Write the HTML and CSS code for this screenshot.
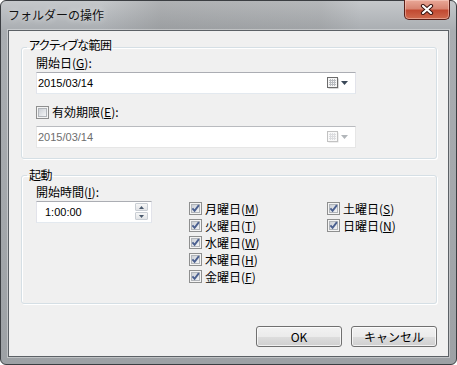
FILE: index.html
```html
<!DOCTYPE html>
<html lang="ja">
<head>
    <meta charset="UTF-8">
    <meta name="viewport" content="width=device-width, initial-scale=1.0">
    <title>フォルダーの操作</title>
    <link rel="stylesheet" href="styles.css">
</head>
<body>
    <div class="window">
        <div class="titlebar">
            <span class="title">フォルダーの操作</span>
            <button class="close" aria-label="閉じる">
                <svg width="14" height="11" viewBox="0 0 14 11">
                    <path d="M3 2 L11 9 M11 2 L3 9" stroke="#3a1410" stroke-width="4.2" stroke-linecap="round"/>
                    <path d="M3 2 L11 9 M11 2 L3 9" stroke="#ffffff" stroke-width="2.2" stroke-linecap="round"/>
                </svg>
            </button>
        </div>

        <div class="client">
            <fieldset class="group group-range">
                <legend>アクティブな範囲</legend>
                <div class="field-label">開始日(<u>G</u>):</div>
                <div class="datebox">
                    <span class="value">2015/03/14</span>
                    <span class="picker">
                        <svg class="cal" width="12" height="12" viewBox="0 0 12 12"><use href="#cal"/></svg>
                        <svg class="drop" width="8" height="5" viewBox="0 0 8 5"><path d="M0 0 H7 L3.5 4 Z"/></svg>
                    </span>
                </div>
                <label class="check check-end">
                    <svg class="box" width="13" height="13" viewBox="0 0 13 13"><use href="#cb"/></svg>
                    <span>有効期限(<u>E</u>):</span>
                </label>
                <div class="datebox disabled">
                    <span class="value">2015/03/14</span>
                    <span class="picker">
                        <svg class="cal" width="12" height="12" viewBox="0 0 12 12"><use href="#cal-off"/></svg>
                        <svg class="drop" width="8" height="5" viewBox="0 0 8 5"><path d="M0 0 H7 L3.5 4 Z"/></svg>
                    </span>
                </div>
            </fieldset>

            <fieldset class="group group-start">
                <legend>起動</legend>
                <div class="field-label">開始時間(<u>I</u>):</div>
                <div class="start-row">
                    <div class="timebox">
                        <span class="value">1:00:00</span>
                        <span class="spin">
                            <span class="spin-btn"><svg width="5" height="3" viewBox="0 0 5 3"><path d="M0 3 H5 L2.5 0 Z"/></svg></span>
                            <span class="spin-btn"><svg width="5" height="3" viewBox="0 0 5 3"><path d="M0 0 H5 L2.5 3 Z"/></svg></span>
                        </span>
                    </div>
                    <div class="days">
                        <label class="check"><svg class="box" width="13" height="13" viewBox="0 0 13 13"><use href="#cb-on"/></svg><span>月曜日(<u>M</u>)</span></label>
                        <label class="check"><svg class="box" width="13" height="13" viewBox="0 0 13 13"><use href="#cb-on"/></svg><span>火曜日(<u>T</u>)</span></label>
                        <label class="check"><svg class="box" width="13" height="13" viewBox="0 0 13 13"><use href="#cb-on"/></svg><span>水曜日(<u>W</u>)</span></label>
                        <label class="check"><svg class="box" width="13" height="13" viewBox="0 0 13 13"><use href="#cb-on"/></svg><span>木曜日(<u>H</u>)</span></label>
                        <label class="check"><svg class="box" width="13" height="13" viewBox="0 0 13 13"><use href="#cb-on"/></svg><span>金曜日(<u>F</u>)</span></label>
                        <label class="check"><svg class="box" width="13" height="13" viewBox="0 0 13 13"><use href="#cb-on"/></svg><span>土曜日(<u>S</u>)</span></label>
                        <label class="check"><svg class="box" width="13" height="13" viewBox="0 0 13 13"><use href="#cb-on"/></svg><span>日曜日(<u>N</u>)</span></label>
                    </div>
                </div>
            </fieldset>

            <div class="buttons">
                <button class="btn">OK</button>
                <button class="btn">キャンセル</button>
            </div>
        </div>
    </div>

    <svg class="defs" width="0" height="0">
        <defs>
            <linearGradient id="cbfill" x1="0" y1="0" x2="1" y2="1">
                <stop offset="0" stop-color="#c9cdd3"/>
                <stop offset="1" stop-color="#f6f7f8"/>
            </linearGradient>
            <symbol id="cb" viewBox="0 0 13 13">
                <rect x="0.5" y="0.5" width="12" height="12" fill="#f4f4f4" stroke="#8e8f8f"/>
                <rect x="2.5" y="2.5" width="8" height="8" fill="url(#cbfill)" stroke="#b1b5ba"/>
            </symbol>
            <symbol id="cb-on" viewBox="0 0 13 13">
                <use href="#cb"/>
                <path d="M3.4 6.4 L5.6 8.8 L9.9 3.2" fill="none" stroke="#4a5f8f" stroke-width="1.9"/>
            </symbol>
            <symbol id="cal" viewBox="0 0 12 12">
                <rect x="1.5" y="1.5" width="10" height="10" fill="#b4b4b4"/>
                <rect x="0.5" y="0.5" width="10" height="10" fill="#f6f6f6" stroke="#6b6b6b"/>
                <path d="M2 3.5 H9 M2 5.5 H9 M2 7.5 H9 M3.5 2 V9 M5.5 2 V9 M7.5 2 V9" stroke="#b9bcc0"/>
            </symbol>
            <symbol id="cal-off" viewBox="0 0 12 12">
                <rect x="1.5" y="1.5" width="10" height="10" fill="#dedede"/>
                <rect x="0.5" y="0.5" width="10" height="10" fill="#f9f9f9" stroke="#c2c2c2"/>
                <path d="M2 3.5 H9 M2 5.5 H9 M2 7.5 H9 M3.5 2 V9 M5.5 2 V9 M7.5 2 V9" stroke="#dcdde0"/>
            </symbol>
        </defs>
    </svg>
</body>
</html>
```

FILE: styles.css
```css
body {
    margin: 0;
    overflow: hidden;
    font-family: "Noto Sans CJK JP", sans-serif;
    font-size: 12px;
    color: #000;
    font-feature-settings: "palt";
}
.window {
    box-sizing: border-box;
    width: 457px;
    height: 365px;
    display: flex;
    flex-direction: column;
    padding-bottom: 7px;
    border: 1px solid #3b3e42;
    border-radius: 6px;
    background: linear-gradient(to bottom, #c5c8cb 0, #a9adb1 30px, #a3a7ab 60%, #9da1a5 100%);
}
.titlebar {
    height: 29px;
    display: flex;
    justify-content: space-between;
    align-items: flex-start;
    padding: 0 6px 0 7px;
    background: linear-gradient(to right, rgba(255,255,255,0) 100px, rgba(110,110,110,0.25) 160px, rgba(120,120,120,0.2) 320px, rgba(255,255,255,0) 360px);
}
.title {
    margin-top: 5px;
    line-height: 18px;
    font-feature-settings: normal;
    color: #111;
    text-shadow: 0 0 6px rgba(255,255,255,0.8);
}
.close {
    width: 46px;
    height: 20px;
    margin-top: -1px;
    padding: 0;
    display: flex;
    justify-content: center;
    align-items: center;
    border: 1px solid #5a1f18;
    border-top: none;
    border-radius: 0 0 5px 5px;
    background: linear-gradient(to bottom, #e9a898 0, #d88572 45%, #c24a32 55%, #cf6a4e 100%);
    box-shadow: inset 0 0 0 1px rgba(255,220,210,0.45);
}
.client {
    flex: 1;
    margin: 0 7px;
    padding: 0 11px 0 12px;
    border: 1px solid #5c6166;
    background: #f0f0f0;
    box-shadow: 0 0 0 1px rgba(255,255,255,0.35);
}
.group {
    margin: 8px 0 0;
    padding: 0 14px;
    border: 1px solid #d5dfe5;
    border-radius: 3px;
    box-shadow: 1px 1px 0 #fff, inset 1px 1px 0 #fff;
}
.group legend {
    margin-left: -9px;
    padding: 0 2px;
    line-height: 16px;
    letter-spacing: -0.6px;
}
.group-range legend {
    line-height: 12px;
    padding-bottom: 4px;
}
.group-range {
    padding-bottom: 10px;
}
.group-start {
    padding-bottom: 18px;
}
.field-label {
    line-height: 14px;
}
.group-range .field-label {
    padding-top: 1px;
}
.group-start .field-label {
    padding-top: 2px;
}
.datebox {
    box-sizing: border-box;
    width: 320px;
    height: 22px;
    margin-top: 2px;
    display: flex;
    justify-content: space-between;
    align-items: center;
    padding: 0 6px 0 1px;
    background: #fff;
    border: 1px solid #e2e3ea;
    border-top-color: #abadb3;
    border-bottom-color: #e3e9ef;
}
.datebox.disabled {
    margin-top: 6px;
    border-color: #e6e6e6;
    border-top-color: #b9bbbf;
    color: #6d6d6d;
}
.value {
    font-family: "Liberation Sans", "Noto Sans CJK JP", sans-serif;
    font-size: 11px;
}
.picker {
    display: flex;
    align-items: center;
    gap: 2px;
}
.picker svg {
    display: block;
}
.drop {
    fill: #3a4858;
}
.disabled .drop {
    fill: #b2b6ba;
}
.check {
    display: flex;
    align-items: center;
    gap: 3px;
    line-height: 16px;
}
.check .box {
    display: block;
    flex: none;
}
.check-end {
    margin-top: 10px;
}
.start-row {
    display: flex;
    align-items: flex-start;
    gap: 37px;
    margin-top: 1px;
}
.timebox {
    box-sizing: border-box;
    width: 116px;
    height: 22px;
    margin-top: 1px;
    display: flex;
    justify-content: space-between;
    align-items: center;
    padding: 0 3px 0 8px;
    background: #fff;
    border: 1px solid #e2e3ea;
    border-top-color: #abadb3;
    border-bottom-color: #e3e9ef;
}
.spin {
    display: flex;
    flex-direction: column;
    gap: 1px;
    align-self: flex-start;
    margin-top: 1px;
}
.spin-btn {
    box-sizing: border-box;
    width: 13px;
    height: 8px;
    display: flex;
    justify-content: center;
    align-items: center;
    border: 1px solid #c9ced4;
    border-radius: 1px;
    background: linear-gradient(to bottom, #f7f7f7, #e2e4e7);
}
.spin-btn svg {
    display: block;
    fill: #4b5a6e;
}
.days {
    display: grid;
    grid-template-columns: 138px auto;
    grid-template-rows: repeat(5, 17px);
    grid-auto-flow: column;
}
.buttons {
    display: flex;
    justify-content: flex-end;
    gap: 9px;
    margin-top: 22px;
}
.btn {
    box-sizing: border-box;
    width: 86px;
    height: 21px;
    padding: 0;
    font-family: inherit;
    font-size: 12px;
    color: #000;
    border: 1px solid #707070;
    border-radius: 3px;
    background: linear-gradient(to bottom, #f2f2f2 0, #ebebeb 50%, #dddddd 51%, #cfcfcf 100%);
    box-shadow: inset 0 0 0 1px rgba(255,255,255,0.7);
}
.defs {
    display: block;
}
```
